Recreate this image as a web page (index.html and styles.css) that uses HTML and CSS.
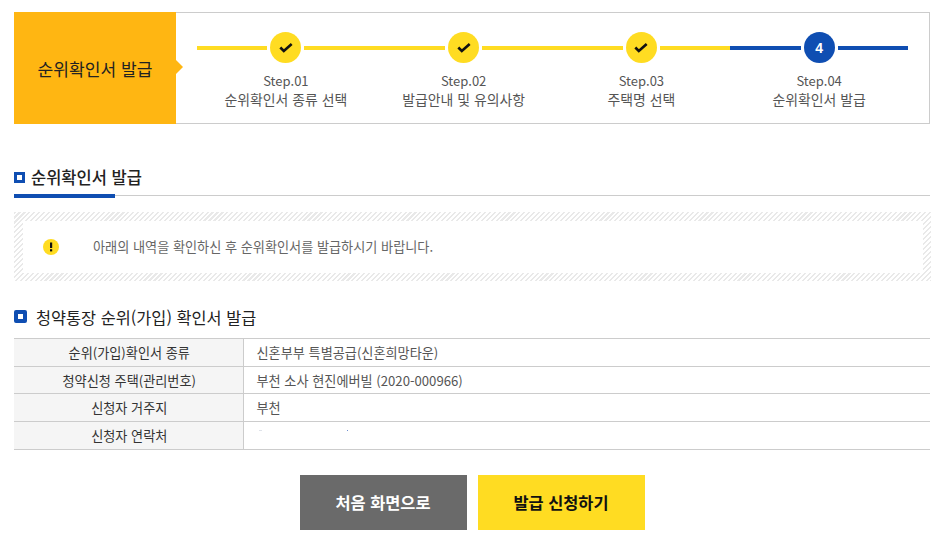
FILE: index.html
```html
<!DOCTYPE html>
<html lang="ko">
<head>
<meta charset="utf-8">
<title>순위확인서 발급</title>
<link rel="stylesheet" href="styles.css">
</head>
<body>
<main class="page">
  <section class="stepbox">
    <div class="stepbox-title">순위확인서 발급</div>
    <ol class="steps">
      <li class="step">
        <div class="step-head"><span class="line"></span><span class="dot"><svg viewBox="0 0 16 12" width="14" height="11"><path d="M1.5 6l4 4 9-8" fill="none" stroke="#111" stroke-width="3"/></svg></span><span class="line"></span></div>
        <div class="step-no">Step.01</div>
        <div class="step-label">순위확인서 종류 선택</div>
      </li>
      <li class="step">
        <div class="step-head"><span class="line"></span><span class="dot"><svg viewBox="0 0 16 12" width="14" height="11"><path d="M1.5 6l4 4 9-8" fill="none" stroke="#111" stroke-width="3"/></svg></span><span class="line"></span></div>
        <div class="step-no">Step.02</div>
        <div class="step-label">발급안내 및 유의사항</div>
      </li>
      <li class="step">
        <div class="step-head"><span class="line"></span><span class="dot"><svg viewBox="0 0 16 12" width="14" height="11"><path d="M1.5 6l4 4 9-8" fill="none" stroke="#111" stroke-width="3"/></svg></span><span class="line"></span></div>
        <div class="step-no">Step.03</div>
        <div class="step-label">주택명 선택</div>
      </li>
      <li class="step current">
        <div class="step-head"><span class="line"></span><span class="dot">4</span><span class="line"></span></div>
        <div class="step-no">Step.04</div>
        <div class="step-label">순위확인서 발급</div>
      </li>
    </ol>
  </section>

  <h2 class="heading-main"><span class="sq"></span>순위확인서 발급</h2>

  <div class="notice">
    <div class="notice-inner">
      <svg class="notice-icon" viewBox="0 0 16 16" width="16" height="16"><circle cx="8" cy="8" r="8" fill="#ffdc22"/><rect x="7" y="3.5" width="2.2" height="5.5" fill="#111"/><rect x="7" y="10.2" width="2.2" height="2.2" fill="#111"/></svg>
      <p>아래의 내역을 확인하신 후 순위확인서를 발급하시기 바랍니다.</p>
    </div>
  </div>

  <h3 class="heading-sub"><span class="sq2"></span>청약통장 순위(가입) 확인서 발급</h3>

  <table class="info">
    <tr><th>순위(가입)확인서 종류</th><td>신혼부부 특별공급(신혼희망타운)</td></tr>
    <tr><th>청약신청 주택(관리번호)</th><td>부천 소사 현진에버빌 (2020-000966)</td></tr>
    <tr><th>신청자 거주지</th><td>부천</td></tr>
    <tr><th>신청자 연락처</th><td class="masked"><span class="speck"></span><span class="speck-light"></span></td></tr>
  </table>

  <div class="actions">
    <a class="btn btn-gray">처음 화면으로</a>
    <a class="btn btn-yellow">발급 신청하기</a>
  </div>
</main>
</body>
</html>
```
FILE: styles.css
```css
* { box-sizing: border-box; }
html, body { margin: 0; padding: 0; background: #fff; }
body { font-family: "Noto Sans CJK KR", "Noto Sans", sans-serif; color: #444; overflow: hidden; }
.page { width: 916px; margin-left: 14px; padding-top: 12px; }

.stepbox { display: flex; height: 112px; border: 1px solid #ccc; border-left: 0; }
.stepbox-title {
  position: relative; width: 162px; margin: -1px 0; background: #ffb612; color: #222;
  font-size: 17.1px; display: flex; align-items: center; justify-content: center;
}
.stepbox-title::after {
  content: ""; position: absolute; left: 100%; top: 48px;
  border-left: 7px solid #ffb612; border-top: 7px solid transparent; border-bottom: 7px solid transparent;
}
.steps { display: flex; flex: 1; list-style: none; margin: 0; padding: 19px 21px 0; }
.step { flex: 1; text-align: center; }
.step-head { display: flex; align-items: center; gap: 3px; height: 31px; }
.line { flex: 1; height: 4px; margin-top: 1px; background: #ffdc22; }
.dot {
  width: 31px; height: 31px; border-radius: 50%; background: #ffdc22;
  display: flex; align-items: center; justify-content: center;
  color: #fff; font: bold 14px "Liberation Sans", sans-serif;
}
.current .line { background: #0f4eb2; }
.current .dot { background: #0f4eb2; }
.step-no { margin-top: 9px; font-size: 13px; line-height: 18px; color: #555; }
.step-label { font-size: 13.9px; line-height: 18px; color: #555; }

.heading-main {
  display: flex; align-items: center; gap: 6px; position: relative;
  margin: 36px 0 0; height: 36px; padding: 2px 0 3px; border-bottom: 1px solid #ccc;
  font-size: 16.5px; font-weight: 500; color: #222;
}
.heading-main::after {
  content: ""; position: absolute; left: 0; bottom: -3px; width: 101px; height: 4px; background: #0f4eb2;
}
.sq { width: 11px; height: 11px; border: 3px solid #0f4eb2; }

.notice {
  margin: 16px -1px 0 0; height: 69px; padding: 9px 8px 8px 9px;
  background: repeating-linear-gradient(135deg, #e9e9e9 0 1.5px, #fff 1.5px 3.5px);
}
.notice-inner { display: flex; align-items: center; height: 52px; padding: 0 0 2px 20px; background: #fff; }
.notice-icon { flex: none; margin-top: 2px; }
.notice-inner p { margin: 0 0 0 34px; font-size: 13.15px; color: #666; }

.heading-sub {
  display: flex; align-items: center; gap: 9px; margin: 22px 0 0; height: 27px;
  font-size: 16.35px; font-weight: 400; color: #222;
}
.sq2 { width: 13px; height: 13px; border: 4px solid #0f4eb2; border-radius: 2px; background: #fff; }

.info { width: 916px; margin-top: 8px; border-collapse: collapse; font-size: 13.15px; table-layout: fixed; }
.info tr { height: 27.7px; border-top: 1px solid #ccc; border-bottom: 1px solid #ccc; }
.info th { width: 229px; padding: 0 0 0 2px; background: #f5f5f5; border-right: 1px solid #ccc; font-weight: 400; color: #333; }
.info td { padding: 0 0 0 13px; color: #555; }
.info .masked { position: relative; }
.speck { position: absolute; left: 103px; top: 8px; width: 1px; height: 1px; background: #6f8fd0; }
.speck-light { position: absolute; left: 15px; top: 8px; width: 3px; height: 1px; background: #dfe3ea; }

.actions { display: flex; justify-content: center; gap: 11px; margin-top: 25px; }
.btn {
  width: 167px; height: 55px; display: flex; align-items: center; justify-content: center;
  font-size: 16.4px; font-weight: 700;
}
.btn-gray { background: #6a6a6a; color: #fff; }
.btn-yellow { background: #ffdc22; color: #111; }
```
